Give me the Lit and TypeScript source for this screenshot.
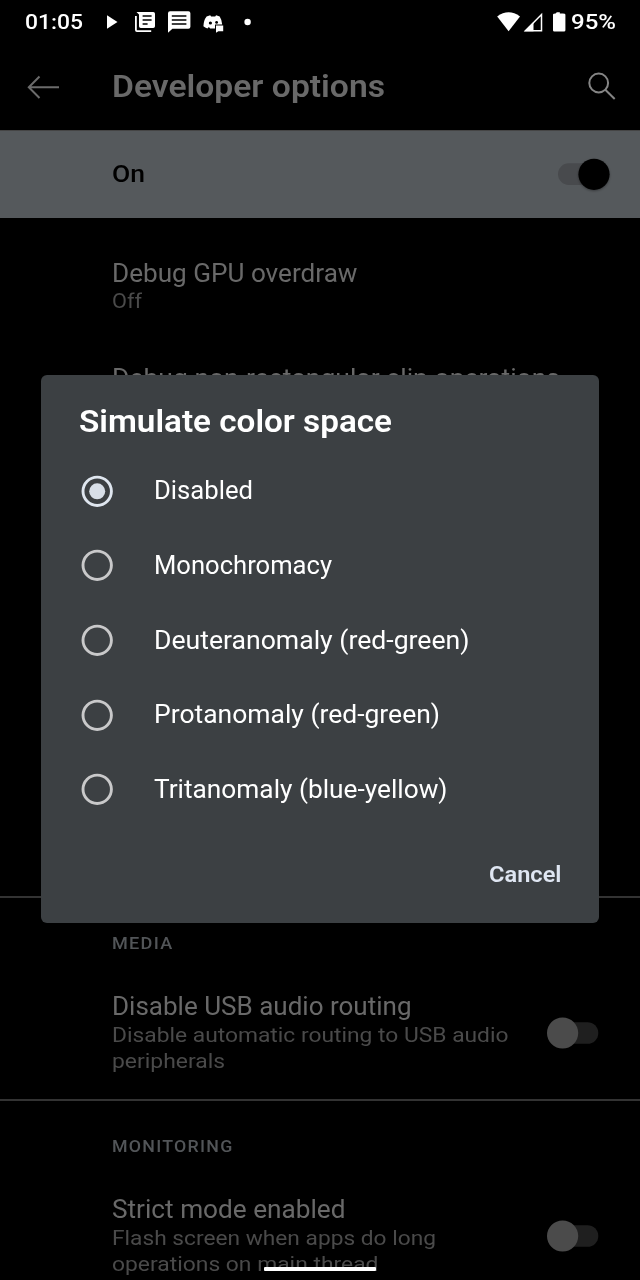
import { LitElement, html, css, svg, nothing } from "lit";
import { customElement, property, state } from "lit/decorators.js";

/** A single line of text whose glyphs are widened to span a given width. */
@customElement("fit-text")
class FitText extends LitElement {
  @property({ type: Number }) span = 0;
  @property() text = "";
  @state() private stretch = 1;

  static styles = css`
    :host { display: block; white-space: pre; }
    .box { display: block; }
    .line { display: inline-block; vertical-align: top; transform-origin: 0 50%; }
  `;

  firstUpdated() {
    const el = this.renderRoot.querySelector(".line") as HTMLElement;
    this.stretch = this.span / el.getBoundingClientRect().width;
  }

  render() {
    return html`<span class="box" style="width:${this.span}px"
      ><span class="line" style="transform:scaleX(${this.stretch})">${this.text}</span></span
    >`;
  }
}

@customElement("toggle-switch")
class ToggleSwitch extends LitElement {
  @property({ type: Boolean }) on = false;

  static styles = css`
    :host { display: block; width: 54px; height: 34px; }
    svg { display: block; overflow: visible; }
    .shade { filter: drop-shadow(0 1.5px 1px rgba(0, 0, 0, 0.35)); }
  `;

  render() {
    return html`<svg width="54" height="34" viewBox="0 0 54 34">
      ${this.on
        ? svg`<rect x="1" y="6.3" width="46" height="21.6" rx="10.8" fill="#484a4d"></rect>
              <circle class="shade" cx="37" cy="17.3" r="15.6" fill="#000"></circle>`
        : svg`<rect x="8" y="6.2" width="43.3" height="21.6" rx="10.8" fill="#1f1f1f"></rect>
              <circle cx="15.6" cy="17" r="15.6" fill="#4b4b4b"></circle>`}
    </svg>`;
  }
}

type Line = [string, number];
interface Pref { title: Line; summary: Line[]; toggle?: boolean; }

@customElement("app-root")
class AppRoot extends LitElement {
  @state() private selected = 0;

  private options: Line[] = [
    ["Disabled", 99],
    ["Monochromacy", 178],
    ["Deuteranomaly (red-green)", 315.5],
    ["Protanomaly (red-green)", 286],
    ["Tritanomaly (blue-yellow)", 293.5],
  ];

  static styles = css`
    :host {
      display: block; position: relative; width: 640px; height: 1280px;
      overflow: hidden; background: #000; color: #696969;
      font-family: Roboto, "Noto Sans", sans-serif;
    }
    svg { display: block; flex: none; }
    .status { height: 44px; display: flex; align-items: center; color: #fff; font-size: 21px; font-weight: 500; line-height: 44px; }
    .clock { width: 81px; padding-left: 25px; }
    .spacer { flex: 1; }
    .battery { padding-right: 24px; }
    .appbar { height: 86px; display: flex; align-items: center; }
    .back { width: 112px; }
    .heading { flex: 1; font-size: 30.5px; font-weight: 600; line-height: 86px; height: 86px; }
    .master { height: 87.5px; box-sizing: border-box; background: #55595c; border-top: 1px solid #454545; color: #000; display: flex; align-items: center; justify-content: space-between; padding: 0 29px 0 112px; font-size: 24.5px; font-weight: 500; }
    .state { padding-bottom: 2px; }
    .group { box-sizing: border-box; }
    .first { height: 678.5px; padding-top: 41.5px; display: flex; flex-direction: column; gap: 49.5px; }
    .first .summary { line-height: 25px; }
    .media { height: 203px; }
    .ruled { border-top: 2px solid #333; padding-top: 35px; }
    .category { color: #525558; font-size: 17.2px; font-weight: 500; letter-spacing: 1.2px; line-height: 20px; padding: 0 0 38.5px 112px; }
    .pref { display: flex; justify-content: space-between; padding: 0 39px 0 112px; }
    .title { font-size: 25px; line-height: 30px; }
    .summary { font-size: 21px; line-height: 26px; color: #4a4a4a; }
    .knob { padding-top: 24px; }
    .home { position: absolute; left: 264px; top: 1267px; width: 112px; height: 4px; border-radius: 1px; background: #fff; }
    .dialog { position: absolute; left: 41px; top: 375px; width: 558px; height: 548px; border-radius: 6px; background: #3c4043; color: #fff; box-sizing: border-box; padding: 27px 38px 0; }
    .caption { font-size: 30.5px; font-weight: 600; line-height: 40px; height: 51.5px; }
    .option { height: 74.65px; display: flex; align-items: center; gap: 40.5px; font-size: 25px; cursor: pointer; padding-left: 2px; }
    .actions { display: flex; justify-content: flex-end; padding-top: 33.5px; font-size: 21.5px; font-weight: 600; line-height: 30px; color: #dfe6f2; }
  `;

  private text([text, span]: Line) {
    return html`<fit-text .text=${text} .span=${span}></fit-text>`;
  }

  private pref(p: Pref) {
    return html`<div class="pref">
      <div>
        <div class="title">${this.text(p.title)}</div>
        <div class="summary">${p.summary.map((l) => this.text(l))}</div>
      </div>
      ${p.toggle ? html`<toggle-switch class="knob"></toggle-switch>` : nothing}
    </div>`;
  }

  private radio(on: boolean) {
    return html`<svg width="32" height="32" viewBox="0 0 32 32">
      <circle cx="16.2" cy="16.3" r="14.2" fill="none" stroke=${on ? "#dfe6ef" : "#c9c9ca"} stroke-width="2.9"></circle>
      ${on ? svg`<circle cx="16.2" cy="16.3" r="8" fill="#d8dfe8"></circle>` : nothing}
    </svg>`;
  }

  render() {
    return html`
      <div class="status">
        <div class="clock">${this.text(["01:05", 58])}</div>
        <svg width="160" height="44" viewBox="106 0 160 44" fill="#fff">
          <path d="M107 15.3v13.4L117.5 22z"></path>
          <path d="M136.5 12h16.7q1.800 0 1.800 1.800v12.400q0 1.800-1.800 1.800h-12.400q-1.800 0-1.800-1.800V14.500zM135 16h1.800v14.200h14.400V32H137q-2 0-2-2z"></path>
          <path d="M142.600 16h9M142.600 20h9M142.600 24h5" stroke="#000" stroke-width="1.700"></path>
          <path d="M170 11.200h18.400q2 0 2 2v13.600q0 2-2 2h-16L168 32.800V13.200q0-2 2-2z"></path>
          <path d="M171.800 16h14.600M171.800 20h14.600M171.800 24h14.600" stroke="#000" stroke-width="1.700"></path>
          <path d="M206.600 16.400l3.600-1.200.9 1.300h4.100l.9-1.300 3.600 1.200q2 3 2.500 8.100H215v4h-4.800l-1.300-1.600-1.500 1.500q-2.400-.6-4-2.200.2-6 3.200-9.800z"></path>
          <circle cx="210.400" cy="23" r="1.600" fill="#000"></circle>
          <circle cx="216.600" cy="22.400" r="1.400" fill="#000"></circle>
          <path d="M216 25.400h7.200v5.800h-4.800l-2.400 1.600z"></path>
          <circle cx="247.600" cy="22" r="3.200"></circle>
        </svg>
        <div class="spacer"></div>
        <svg width="74" height="44" viewBox="497 0 74 44" fill="#fff">
          <path d="M497.200 16.400Q508.600 8 520 16.400L508.600 31.200z"></path>
          <path d="M541.500 14.500V30.700H525.500z" fill="none" stroke="#fff" stroke-width="1.500"></path>
          <path d="M533.500 22v9.300H524.200z"></path>
          <path d="M556.800 12.200h3v1.400h3q2.600 0 2.600 1v15.600q0 1.400-1.400 1.400h-9.600q-1.400 0-1.400-1.400V14.600q0-1 2.600-1z"></path>
        </svg>
        <div class="battery">${this.text(["95%", 45])}</div>
      </div>
      <div class="appbar">
        <svg class="back" width="112" height="86" viewBox="0 0 112 86" fill="none" stroke="#6b6b6b" stroke-width="2">
          <path d="M59 43.300H29M39.500 32.500L28.800 43.300L39.500 54"></path>
        </svg>
        <div class="heading">${this.text(["Developer options", 273])}</div>
        <svg width="54" height="86" viewBox="586 44 54 86" fill="none" stroke="#858585" stroke-width="2">
          <circle cx="598.700" cy="83" r="9.400"></circle>
          <path d="M605.300 89.700L614.700 99"></path>
        </svg>
      </div>
      <div class="master"><div class="state">${this.text(["On", 33])}</div><toggle-switch on></toggle-switch></div>
      <div class="group first">
        ${this.pref({ title: ["Debug GPU overdraw", 245.5], summary: [["Off", 30]] })}
        ${this.pref({ title: ["Debug non-rectangular clip operations", 448], summary: [] })}
      </div>
      <div class="group ruled media">
        <div class="category">${this.text(["MEDIA", 61.5])}</div>
        ${this.pref({
          title: ["Disable USB audio routing", 299.5],
          summary: [["Disable automatic routing to USB audio", 396.5], ["peripherals", 113]],
          toggle: true,
        })}
      </div>
      <div class="group ruled">
        <div class="category">${this.text(["MONITORING", 121.5])}</div>
        ${this.pref({
          title: ["Strict mode enabled", 233.5],
          summary: [["Flash screen when apps do long", 324], ["operations on main thread", 266.5]],
          toggle: true,
        })}
      </div>
      <div class="home"></div>
      <div class="dialog" role="dialog">
        <div class="caption">${this.text(["Simulate color space", 313])}</div>
        ${this.options.map(
          (o, i) => html`<div class="option" @click=${() => (this.selected = i)}>
            ${this.radio(i === this.selected)}${this.text(o)}
          </div>`
        )}
        <div class="actions">${this.text(["Cancel", 72.5])}</div>
      </div>
    `;
  }
}
